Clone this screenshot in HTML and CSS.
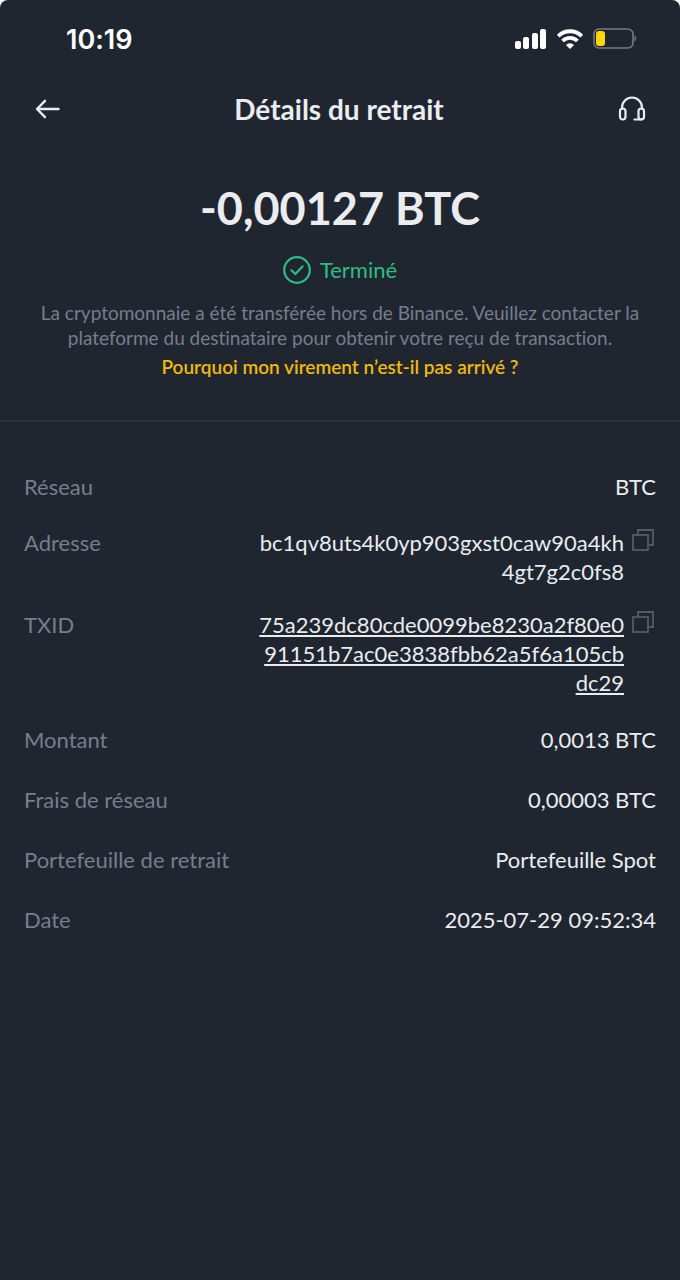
FILE: index.html
```html
<!DOCTYPE html>
<html lang="fr">
<head>
  <meta charset="UTF-8" />
  <meta name="viewport" content="width=device-width, initial-scale=1.0" />
  <title>Détails du retrait</title>
  <link rel="stylesheet" href="styles.css">
</head>
<body>
  <div class="screen">
    <div class="status-bar">
      <span class="clock">10:19</span>
      <div class="status-icons">
        <svg width="32" height="20" viewBox="0 0 32 20" fill="#fff">
          <rect x="0" y="12" width="6" height="8" rx="2" />
          <rect x="8" y="8" width="6" height="12" rx="2" />
          <rect x="17" y="4" width="6" height="16" rx="2" />
          <rect x="25" y="0" width="6" height="20" rx="2" />
        </svg>
        <svg width="26" height="20" viewBox="0 0 26 20" fill="none" stroke="#fff" stroke-width="3.8">
          <path d="M1.200 7.200A16.500 16.500 0 0 1 24.800 7.200" />
          <path d="M5.600 12A10.500 10.500 0 0 1 20.400 12" />
          <path d="M13 20l-4-4.100a5.800 5.800 0 0 1 8 0z" fill="#fff" stroke="none" />
        </svg>
        <svg width="44" height="22" viewBox="0 0 44 22">
          <rect x="1" y="1" width="39" height="19" rx="5" fill="none" stroke="#757a82" stroke-width="1.600" />
          <rect x="3" y="3" width="9" height="15" rx="3" fill="#fdd60b" />
          <path d="M41.500 7.500c2.300.8 2.300 5.200 0 6z" fill="#757a82" />
        </svg>
      </div>
    </div>

    <header class="nav">
      <button class="icon-button" aria-label="Retour">
        <svg width="26" height="20" viewBox="0 0 26 20" fill="none" stroke="#eaecef" stroke-width="2.400" stroke-linecap="round" stroke-linejoin="round">
          <path d="M24.500 10H3M11 1.800L3 10l8 8.200" />
        </svg>
      </button>
      <h1>Détails du retrait</h1>
      <button class="icon-button" aria-label="Assistance">
        <svg width="28" height="26" viewBox="0 0 28 26" fill="none" stroke="#eaecef" stroke-width="2.200" stroke-linecap="round" stroke-linejoin="round">
          <path d="M4 13v-1.500a10 10 0 0 1 20 0V13" />
          <rect x="2" y="12.500" width="5.500" height="11" rx="2.700" />
          <rect x="20.500" y="12.500" width="5.500" height="11" rx="2.700" />
          <path d="M23.200 23.500H16.500" />
        </svg>
      </button>
    </header>

    <main>
      <section class="summary">
        <h2>-0,00127 BTC</h2>
        <p class="status">
          <svg width="28" height="28" viewBox="0 0 28 28" fill="none" stroke="#2ebd85" stroke-width="2.200" stroke-linecap="round" stroke-linejoin="round">
            <circle cx="14" cy="14" r="12.800" />
            <path d="M8.500 14.300l3.800 3.700 7.200-7.600" />
          </svg>
          Terminé
        </p>
        <p class="note">La cryptomonnaie a été transférée hors de Binance. Veuillez contacter la plateforme du destinataire pour obtenir votre reçu de transaction.</p>
        <a class="help" href="#">Pourquoi mon virement n’est-il pas arrivé ?</a>
      </section>

      <dl class="details">
        <div class="row">
          <dt>Réseau</dt>
          <dd>BTC</dd>
        </div>
        <div class="row long">
          <dt>Adresse</dt>
          <dd>bc1qv8uts4k0yp903gxst0caw90a4kh<br>4gt7g2c0fs8</dd>
          <dd class="copy">
            <button class="icon-button" aria-label="Copier l'adresse">
              <svg width="22" height="22" viewBox="0 0 22 22" fill="none" stroke="#535b67" stroke-width="1.800">
                <path d="M6 5V1h15v15h-4" />
                <rect x="1" y="6" width="15" height="15" />
              </svg>
            </button>
          </dd>
        </div>
        <div class="row long">
          <dt>TXID</dt>
          <dd><a href="#">75a239dc80cde0099be8230a2f80e0<br>91151b7ac0e3838fbb62a5f6a105cb<br>dc29</a></dd>
          <dd class="copy">
            <button class="icon-button" aria-label="Copier le TXID">
              <svg width="22" height="22" viewBox="0 0 22 22" fill="none" stroke="#535b67" stroke-width="1.800">
                <path d="M6 5V1h15v15h-4" />
                <rect x="1" y="6" width="15" height="15" />
              </svg>
            </button>
          </dd>
        </div>
        <div class="row">
          <dt>Montant</dt>
          <dd>0,0013 BTC</dd>
        </div>
        <div class="row">
          <dt>Frais de réseau</dt>
          <dd>0,00003 BTC</dd>
        </div>
        <div class="row">
          <dt>Portefeuille de retrait</dt>
          <dd>Portefeuille Spot</dd>
        </div>
        <div class="row">
          <dt>Date</dt>
          <dd>2025-07-29 09:52:34</dd>
        </div>
      </dl>
    </main>
  </div>
</body>
</html>
```

FILE: styles.css
```css
* {
  box-sizing: border-box;
}
body {
  margin: 0;
  background-color: white;
  font-family: Lato, 'Open Sans', sans-serif;
  font-variant-ligatures: none;
}
h1, h2, p, dl, dd {
  margin: 0;
}
svg {
  display: block;
}
.screen {
  min-height: 100vh;
  background-color: #202630;
  color: #eaecef;
  border-radius: 8px 8px 0 0;
}
.status-bar {
  display: flex;
  align-items: center;
  justify-content: space-between;
  height: 78px;
  padding: 0 43px 0 66px;
}
.clock {
  font-family: Inter, sans-serif;
  font-size: 27px;
  font-weight: 600;
  color: white;
}
.status-icons {
  display: flex;
  align-items: center;
  gap: 10px;
}
.nav {
  display: flex;
  align-items: center;
  justify-content: space-between;
  height: 62px;
  padding: 0 34px;
}
h1 {
  font-size: 28px;
  font-weight: 700;
}
.icon-button {
  background: none;
  border: none;
  padding: 0;
  cursor: pointer;
}
.summary {
  display: flex;
  flex-direction: column;
  align-items: center;
  padding: 42px 24px 41px;
  text-align: center;
  border-bottom: 2px solid #2b313a;
}
h2 {
  font-size: 45px;
  line-height: 52px;
  font-weight: 700;
}
.status {
  display: flex;
  align-items: center;
  gap: 9px;
  margin-top: 20px;
  font-size: 22px;
  line-height: 32px;
  color: #2ebd85;
}
.note {
  margin-top: 14px;
  font-size: 19px;
  line-height: 25px;
  color: #777d8b;
}
.help {
  margin-top: 4px;
  font-size: 19px;
  line-height: 25px;
  font-weight: 600;
  color: #f0b90b;
  text-decoration: none;
}
.details {
  padding: 35px 24px;
  font-size: 22px;
  line-height: 29px;
}
.row {
  display: flex;
  padding: 15px 0 16px;
}
.row.long {
  padding: 11px 0 13px;
}
dt {
  flex: 1;
  color: #777d8b;
}
dd {
  text-align: right;
}
dd a {
  color: inherit;
  text-decoration-thickness: 2px;
  text-underline-offset: 2px;
}
.copy {
  padding: 0 2px 0 8px;
}
```
